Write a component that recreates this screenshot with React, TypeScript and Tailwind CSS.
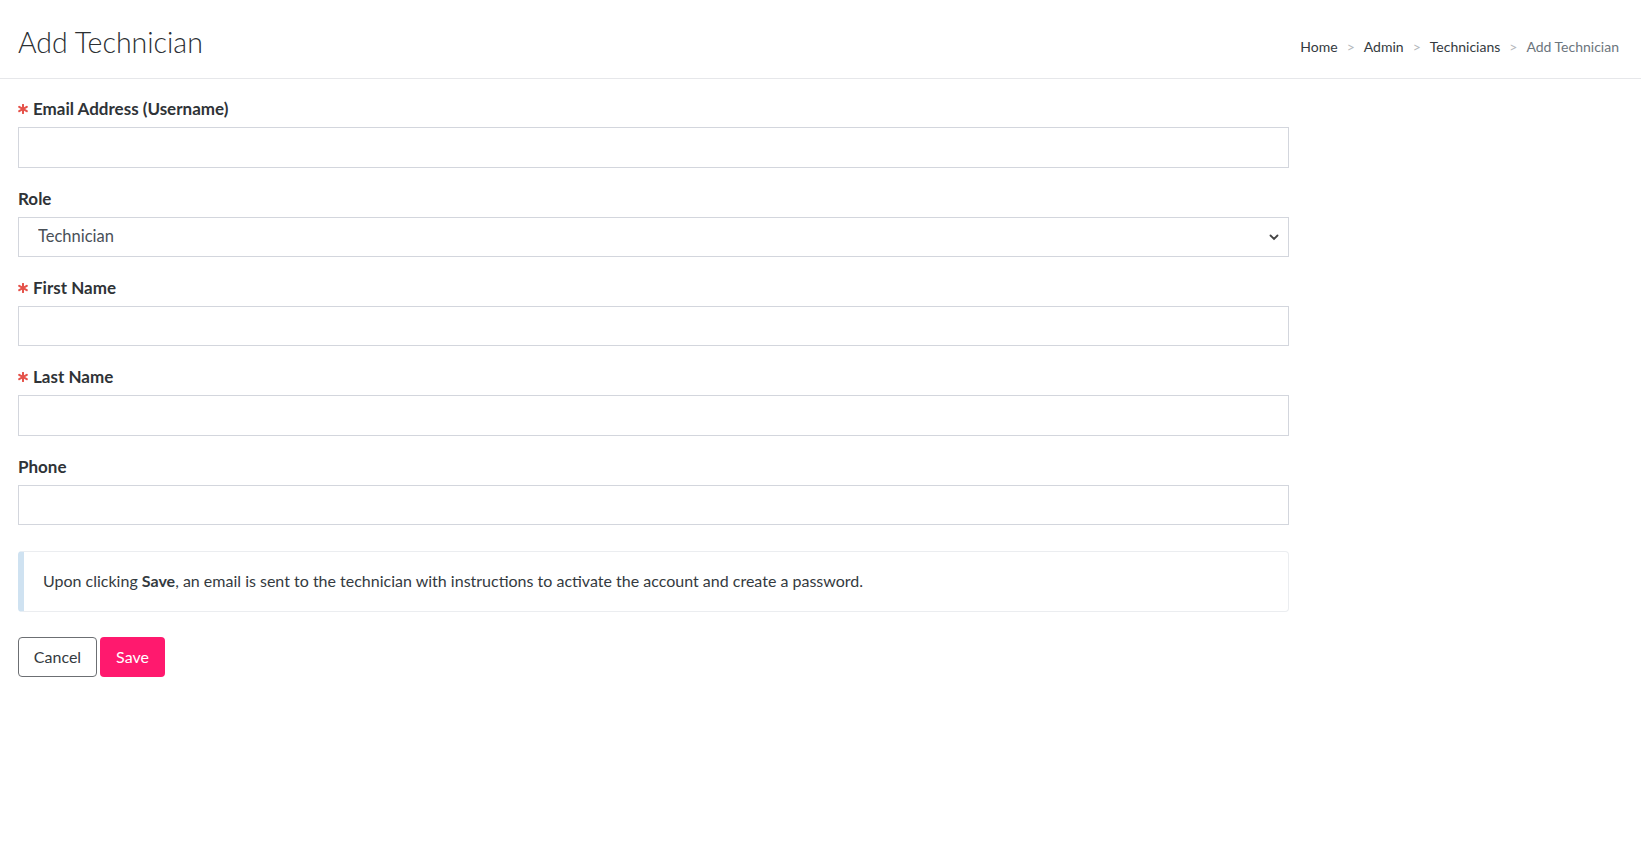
import React from "react";

const font = { fontFamily: "Lato, 'Noto Sans', sans-serif" };

function Required() {
  return (
    <svg width="10" height="10" viewBox="0 0 10 10" className="mr-[5px] inline-block">
      <g stroke="#e5534b" strokeWidth="2" strokeLinecap="round">
        <line x1="5" y1="0.8" x2="5" y2="9.2" />
        <line x1="1.2" y1="2.8" x2="8.8" y2="7.2" />
        <line x1="1.2" y1="7.2" x2="8.8" y2="2.8" />
      </g>
    </svg>
  );
}

function Field({ label, required, children }: { label: string; required?: boolean; children?: React.ReactNode }) {
  return (
    <div className="mb-[19px]">
      <label className="flex items-center h-[24px] mb-[6px] text-[17px] font-bold text-[#2f3337]">
        {required && <Required />}
        {label}
      </label>
      {children ?? (
        <input
          type="text"
          className="block w-full h-[40.5px] border border-[#d3d6dd] bg-white px-[18px] text-[16px] outline-none"
        />
      )}
    </div>
  );
}

export default function App() {
  return (
    <div className="min-h-screen bg-white text-[#343a40]" style={font}>
      {/* Page header */}
      <div className="flex items-center justify-between h-[79px] px-[18px] pr-[22px] border-b border-[#e6e7ea]">
        <h1 className="text-[28.5px] font-light text-[#2b2f33] pt-[7px]">Add Technician</h1>
        <nav className="flex items-center text-[14px] pt-[14px]">
          <span className="text-[#343a40]">Home</span>
          <span className="mx-[9px] text-[#b5b8bc]">&gt;</span>
          <span className="text-[#343a40]">Admin</span>
          <span className="mx-[9px] text-[#b5b8bc]">&gt;</span>
          <span className="text-[#343a40]">Technicians</span>
          <span className="mx-[9px] text-[#b5b8bc]">&gt;</span>
          <span className="text-[#6c757d]">Add Technician</span>
        </nav>
      </div>

      {/* Form */}
      <div className="w-[1271px] ml-[18px] pt-[18px]">
        <Field label="Email Address (Username)" required />
        <Field label="Role">
          <div className="relative">
            <select className="block w-full h-[40px] appearance-none border border-[#d3d6dd] bg-white pl-[19px] text-[16.5px] text-[#495057] outline-none">
              <option>Technician</option>
            </select>
            <svg
              width="12"
              height="12"
              viewBox="0 0 12 12"
              className="absolute right-[9px] top-[14px] pointer-events-none"
            >
              <path d="M2.5 4.5 L6 8 L9.5 4.5" fill="none" stroke="#444" strokeWidth="1.8" strokeLinecap="round" />
            </svg>
          </div>
        </Field>
        <Field label="First Name" required />
        <Field label="Last Name" required />
        <Field label="Phone" />

        <div className="mt-[25.5px] flex items-center h-[61px] border border-[#ebedf0] border-l-[6px] border-l-[#cfe2f1] rounded-[4px] pl-[19px] text-[16px] text-[#343a40]">
          <p>
            Upon clicking <b>Save</b>, an email is sent to the technician with instructions to activate the account and
            create a password.
          </p>
        </div>

        <div className="mt-[25px] flex gap-[3px]">
          <button className="h-[40px] w-[79px] border border-[#6c6f73] rounded-[4px] bg-white text-[16px] text-[#343a40]">
            Cancel
          </button>
          <button className="h-[40px] w-[65px] rounded-[4px] bg-[#ff196e] text-[16px] text-white">Save</button>
        </div>
      </div>
    </div>
  );
}
